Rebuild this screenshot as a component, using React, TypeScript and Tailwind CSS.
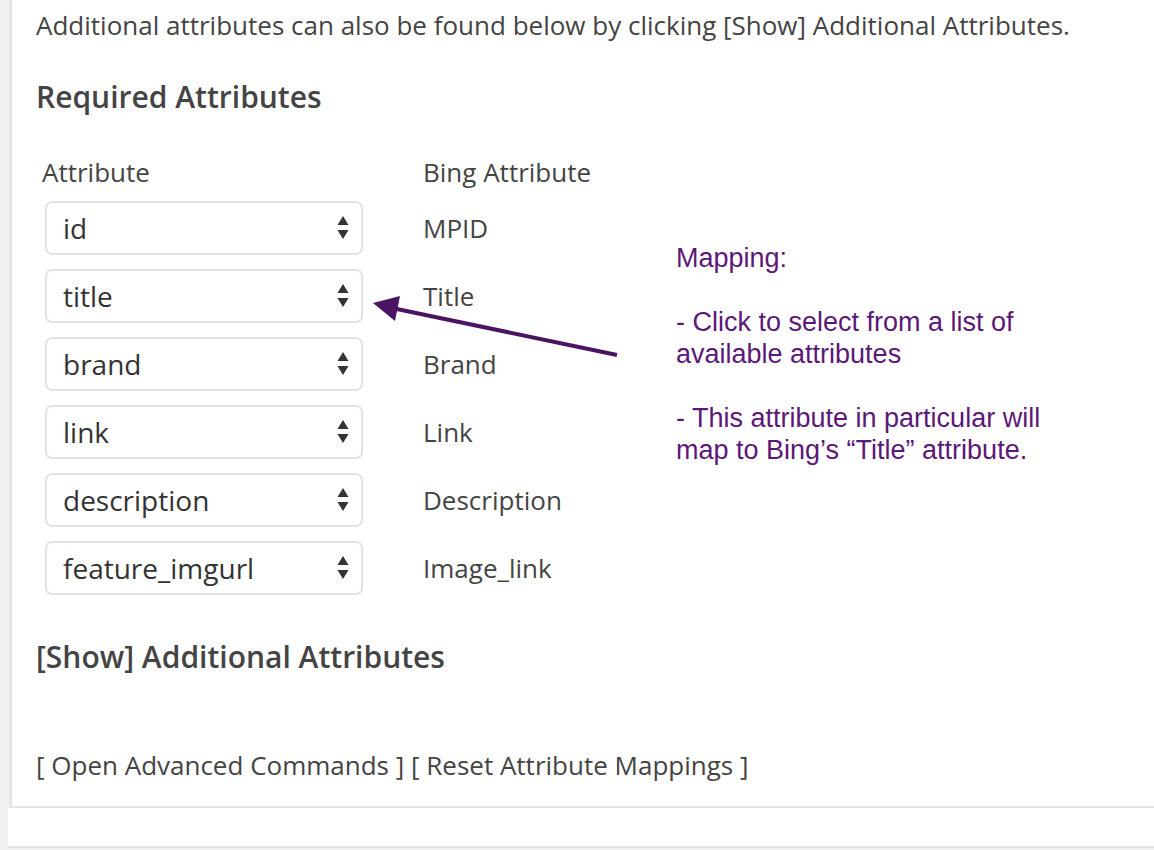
import type { ReactNode } from 'react';

const ROWS: { attr: string; bing: string }[] = [
  { attr: 'id', bing: 'MPID' },
  { attr: 'title', bing: 'Title' },
  { attr: 'brand', bing: 'Brand' },
  { attr: 'link', bing: 'Link' },
  { attr: 'description', bing: 'Description' },
  { attr: 'feature_imgurl', bing: 'Image_link' },
];

const OPEN = { fontFamily: '"Open Sans", "Noto Sans", sans-serif' };
const HELV = { fontFamily: '"Liberation Sans", Arial, sans-serif' };

function SelectArrows() {
  return (
    <svg width="12" height="26" viewBox="0 0 12 26" className="shrink-0">
      <polygon points="6,1 11.5,10 0.5,10" fill="#333" />
      <polygon points="0.5,15 11.5,15 6,24" fill="#333" />
    </svg>
  );
}

function FakeSelect({ value }: { value: string }) {
  return (
    <div className="flex h-[54px] w-[318px] items-center justify-between rounded-[7px] border-2 border-[#e2e2e2] bg-white pl-[16px] pr-[12px] text-[28px] text-[#333]">
      <span>{value}</span>
      <SelectArrows />
    </div>
  );
}

function Note({ children }: { children: ReactNode }) {
  return <p className="m-0">{children}</p>;
}

export default function App() {
  return (
    <div className="flex h-[850px] w-[1154px] flex-col overflow-hidden bg-[#f1f1f1] text-[#444]" style={OPEN}>
      <div className="relative ml-[9px] h-[808px] shrink-0 border-b-2 border-l-[3px] border-[#e5e5e5] bg-white pl-[24px]">
        <p className="mt-[9px] text-[26px] leading-[32px]">
          Additional attributes can also be found below by clicking [Show] Additional Attributes.
        </p>

        <h2 className="mt-[38px] text-[30px] font-semibold leading-[36px] text-[#444]">
          Required Attributes
        </h2>

        <div className="mt-[41px] flex">
          <div className="flex w-[640px] shrink-0 flex-col">
            <div className="flex text-[26px] leading-[32px]">
              <span className="w-[387px] pl-[6px]">Attribute</span>
              <span>Bing Attribute</span>
            </div>
            <div className="mt-[13px] flex flex-col gap-[14px] pl-[9px]">
              {ROWS.map((r) => (
                <div key={r.attr} className="flex items-center">
                  <FakeSelect value={r.attr} />
                  <span className="ml-[60px] text-[26px] leading-[32px]">{r.bing}</span>
                </div>
              ))}
            </div>
          </div>

          <div
            className="mt-[86px] flex flex-col gap-[32px] text-[27px] leading-[32px] text-[#5c1878]"
            style={HELV}
          >
            <Note>Mapping:</Note>
            <Note>
              - Click to select from a list of
              <br />
              available attributes
            </Note>
            <Note>
              - This attribute in particular will
              <br />
              map to Bing’s “Title” attribute.
            </Note>
          </div>
        </div>

        <h3 className="mt-[44px] text-[30px] font-semibold leading-[36px]">[Show] Additional Attributes</h3>

        <p className="mt-[74px] text-[26px] leading-[32px]">
          [ Open Advanced Commands ] [ Reset Attribute Mappings ]
        </p>

        <svg
          className="pointer-events-none absolute left-[-12px] top-0"
          width="1154"
          height="808"
          viewBox="0 0 1154 808"
        >
          <line x1="617" y1="355" x2="392" y2="308" stroke="#4a1462" strokeWidth="4" />
          <polygon points="373,303 400,296 395,321" fill="#4a1462" />
        </svg>
      </div>
      <div className="ml-[8px] h-[40px] shrink-0 border-b-2 border-[#e5e5e5] bg-white" />
    </div>
  );
}
